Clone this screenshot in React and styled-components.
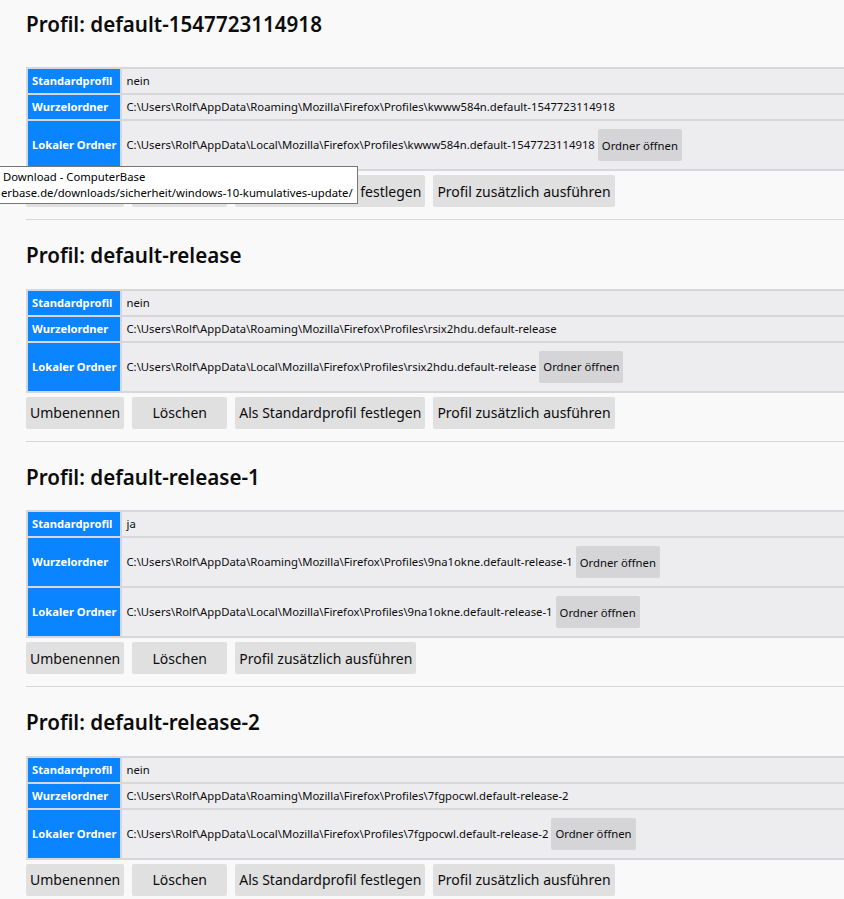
import React from "react";
import styled, { createGlobalStyle } from "styled-components";

const GlobalStyle = createGlobalStyle`
  html, body {
    margin: 0;
    padding: 0;
    overflow: hidden;
    background: #f9f9fa;
  }
  body {
    font-family: "Noto Sans", "Open Sans", sans-serif;
    color: #0c0c0d;
  }
`;

const Page = styled.div`
  position: relative;
  width: 900px;
  padding: 9px 0 0 26px;
`;

const Section = styled.section`
  display: flex;
  flex-direction: column;
  align-items: flex-start;
`;

const Title = styled.h2`
  margin: ${({ $first }) => ($first ? "0 0 28px" : "20px 0 18.5px")};
  font-size: 20.6px;
  line-height: 30px;
  font-weight: 600;
`;

const InfoTable = styled.table`
  width: 100%;
  border-collapse: separate;
  border-spacing: 2px;
  background: #d7d7db;
  font-size: 11.3px;
  line-height: 16px;
`;

const HeadCell = styled.th`
  width: 1%;
  white-space: nowrap;
  padding: 4px;
  background: #0a84ff;
  color: #ffffff;
  font-size: 11.2px;
  font-weight: 700;
  text-align: left;
`;

const ValueCell = styled.td`
  padding: 4px;
  background: #ededf0;
  white-space: nowrap;
`;

const CellLine = styled.div`
  display: flex;
  align-items: center;
`;

const SmallButton = styled.button`
  height: 32px;
  margin: 4px 0 4px 3px;
  padding: 0 4px;
  border: none;
  border-radius: 2px;
  background: rgba(12, 12, 13, 0.1);
  color: #0c0c0d;
  font-family: inherit;
  font-size: 11.3px;
`;

const Actions = styled.div`
  display: flex;
  gap: 8px;
  margin-top: 4px;
`;

const ActionButton = styled.button`
  min-width: 95px;
  height: 32px;
  padding: 0 4px;
  border: none;
  border-radius: 2px;
  background: rgba(12, 12, 13, 0.1);
  color: #0c0c0d;
  font-family: inherit;
  font-size: 14px;
`;

const Divider = styled.hr`
  align-self: stretch;
  margin: 12px 0 0;
  border: none;
  border-top: 1px solid #d7d7db;
`;

/* hover tooltip of a link, drawn over the first profile */
const Tooltip = styled.div`
  position: absolute;
  top: 166px;
  left: -1px;
  padding: 2px 4px 2px 1px;
  background: #ffffff;
  border: 1px solid #767676;
  font-family: "Noto Sans", "Open Sans", sans-serif;
  font-size: 11.3px;
  line-height: 16px;
  color: #000000;
  white-space: nowrap;
`;

const TipLine = styled.div`
  padding-left: ${({ $indent }) => $indent || 0}px;
`;

const base = "C:\\Users\\Rolf\\AppData";
const profiles = [
  { name: "default-1547723114918", dir: "kwww584n.default-1547723114918", isDefault: false, rootOpen: false },
  { name: "default-release", dir: "rsix2hdu.default-release", isDefault: false, rootOpen: false },
  { name: "default-release-1", dir: "9na1okne.default-release-1", isDefault: true, rootOpen: true },
  { name: "default-release-2", dir: "7fgpocwl.default-release-2", isDefault: false, rootOpen: false },
];

function ProfileSection({ profile, first }) {
  const root = `${base}\\Roaming\\Mozilla\\Firefox\\Profiles\\${profile.dir}`;
  const local = `${base}\\Local\\Mozilla\\Firefox\\Profiles\\${profile.dir}`;
  return (
    <Section>
      <Title $first={first}>Profil: {profile.name}</Title>
      <InfoTable>
        <tbody>
          <tr>
            <HeadCell>Standardprofil</HeadCell>
            <ValueCell>
              <CellLine>{profile.isDefault ? "ja" : "nein"}</CellLine>
            </ValueCell>
          </tr>
          <tr>
            <HeadCell>Wurzelordner</HeadCell>
            <ValueCell>
              <CellLine>
                {root}
                {profile.rootOpen && <SmallButton>Ordner öffnen</SmallButton>}
              </CellLine>
            </ValueCell>
          </tr>
          <tr>
            <HeadCell>Lokaler Ordner</HeadCell>
            <ValueCell>
              <CellLine>
                {local}
                <SmallButton>Ordner öffnen</SmallButton>
              </CellLine>
            </ValueCell>
          </tr>
        </tbody>
      </InfoTable>
      <Actions>
        <ActionButton>Umbenennen</ActionButton>
        <ActionButton>Löschen</ActionButton>
        {!profile.isDefault && <ActionButton>Als Standardprofil festlegen</ActionButton>}
        <ActionButton>Profil zusätzlich ausführen</ActionButton>
      </Actions>
      <Divider />
    </Section>
  );
}

export default function App() {
  return (
    <>
      <GlobalStyle />
      <Page>
        {profiles.map((p, i) => (
          <ProfileSection key={p.name} profile={p} first={i === 0} />
        ))}
        <Tooltip>
          <TipLine $indent={2}>Download - ComputerBase</TipLine>
          <TipLine>erbase.de/downloads/sicherheit/windows-10-kumulatives-update/</TipLine>
        </Tooltip>
      </Page>
    </>
  );
}
